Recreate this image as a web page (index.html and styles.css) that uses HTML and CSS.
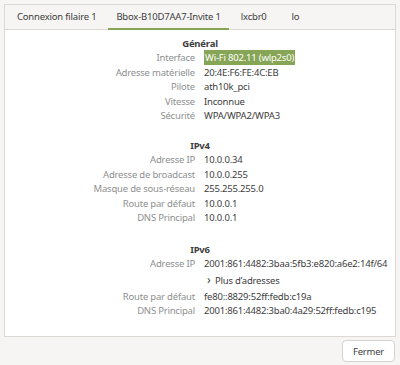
FILE: index.html
```html
<!DOCTYPE html>
<html lang="fr">
<head>
    <meta charset="UTF-8">
    <title>Détails de la connexion</title>
    <link rel="stylesheet" href="styles.css">
</head>
<body>
    <div class="notebook">
        <div class="tabs">
            <div class="tab">Connexion filaire 1</div>
            <div class="tab active">Bbox-B10D7AA7-Invite 1</div>
            <div class="tab">lxcbr0</div>
            <div class="tab tab-small">lo</div>
        </div>
        <div class="page">
            <div class="section">
                <div class="section-title">Général</div>
                <div class="rows">
                    <span class="label">Interface</span><span class="value"><span class="selected">Wi-Fi 802.11 (wlp2s0)</span></span>
                    <span class="label">Adresse matérielle</span><span class="value">20:4E:F6:FE:4C:EB</span>
                    <span class="label">Pilote</span><span class="value">ath10k_pci</span>
                    <span class="label">Vitesse</span><span class="value">Inconnue</span>
                    <span class="label">Sécurité</span><span class="value">WPA/WPA2/WPA3</span>
                </div>
            </div>
            <div class="section section-wide">
                <div class="section-title">IPv4</div>
                <div class="rows">
                    <span class="label">Adresse IP</span><span class="value">10.0.0.34</span>
                    <span class="label">Adresse de broadcast</span><span class="value">10.0.0.255</span>
                    <span class="label">Masque de sous-réseau</span><span class="value">255.255.255.0</span>
                    <span class="label">Route par défaut</span><span class="value">10.0.0.1</span>
                    <span class="label">DNS Principal</span><span class="value">10.0.0.1</span>
                </div>
            </div>
            <div class="section">
                <div class="section-title">IPv6</div>
                <div class="rows">
                    <span class="label">Adresse IP</span><span class="value">2001:861:4482:3baa:5fb3:e820:a6e2:14f/64</span>
                    <span class="label"></span><span class="value expander"><span class="chevron">›</span>Plus d’adresses</span>
                    <span class="label">Route par défaut</span><span class="value">fe80::8829:52ff:fedb:c19a</span>
                    <span class="label">DNS Principal</span><span class="value">2001:861:4482:3ba0:4a29:52ff:fedb:c195</span>
                </div>
            </div>
        </div>
    </div>
    <div class="actions">
        <button class="button">Fermer</button>
    </div>
</body>
</html>
```

FILE: styles.css
```css
body {
    margin: 0;
    padding: 0;
    background: #f6f5f4;
    font-family: "Noto Sans", "DejaVu Sans", sans-serif;
    font-size: 9.5px;
    letter-spacing: -0.2px;
    color: #3d3d3d;
    width: 400px;
    height: 365px;
    display: flex;
    flex-direction: column;
}

.notebook {
    margin: 4px 4px 0 4px;
    border: 1px solid #dcd8d4;
    display: flex;
    flex-direction: column;
    height: 331px;
}

.tabs {
    display: flex;
    height: 24px;
    border-bottom: 1px solid #dcd8d4;
    padding-left: 4px;
    gap: 4px;
}

.tab {
    padding: 0 8px;
    display: flex;
    align-items: center;
    color: #3d3d3d;
    border-bottom: 2px solid transparent;
    margin-bottom: -1px;
}

.tab.active {
    border-bottom-color: #87a556;
}

.tab-small {
    padding: 0 13px;
}

.page {
    flex: 1;
    background: #ffffff;
    padding-top: 6px;
}

.section {
    margin-bottom: 14px;
}

.section-wide {
    margin-bottom: 16px;
}

.section-title {
    text-align: center;
    font-weight: bold;
    height: 15px;
    line-height: 15px;
}

.rows {
    display: grid;
    grid-template-columns: 190px 1fr;
    column-gap: 9px;
    line-height: 14.6px;
}

.label {
    text-align: right;
    color: #8e9091;
}

.value {
    white-space: nowrap;
}

.selected {
    background: #87a556;
    color: #ffffff;
    padding: 1px 1px;
}

.expander {
    line-height: 16px;
    padding: 0 0 1px 3px;
}

.chevron {
    display: inline-block;
    width: 8px;
    font-size: 12px;
}

.actions {
    display: flex;
    justify-content: flex-end;
    padding: 3px 5px 0 0;
}

.button {
    font-family: inherit;
    font-size: 9.5px;
    letter-spacing: -0.2px;
    color: #3d3d3d;
    background: #ffffff;
    border: 1px solid #d6d2ce;
    border-radius: 4px;
    width: 53px;
    height: 22px;
    padding: 0;
}
```
